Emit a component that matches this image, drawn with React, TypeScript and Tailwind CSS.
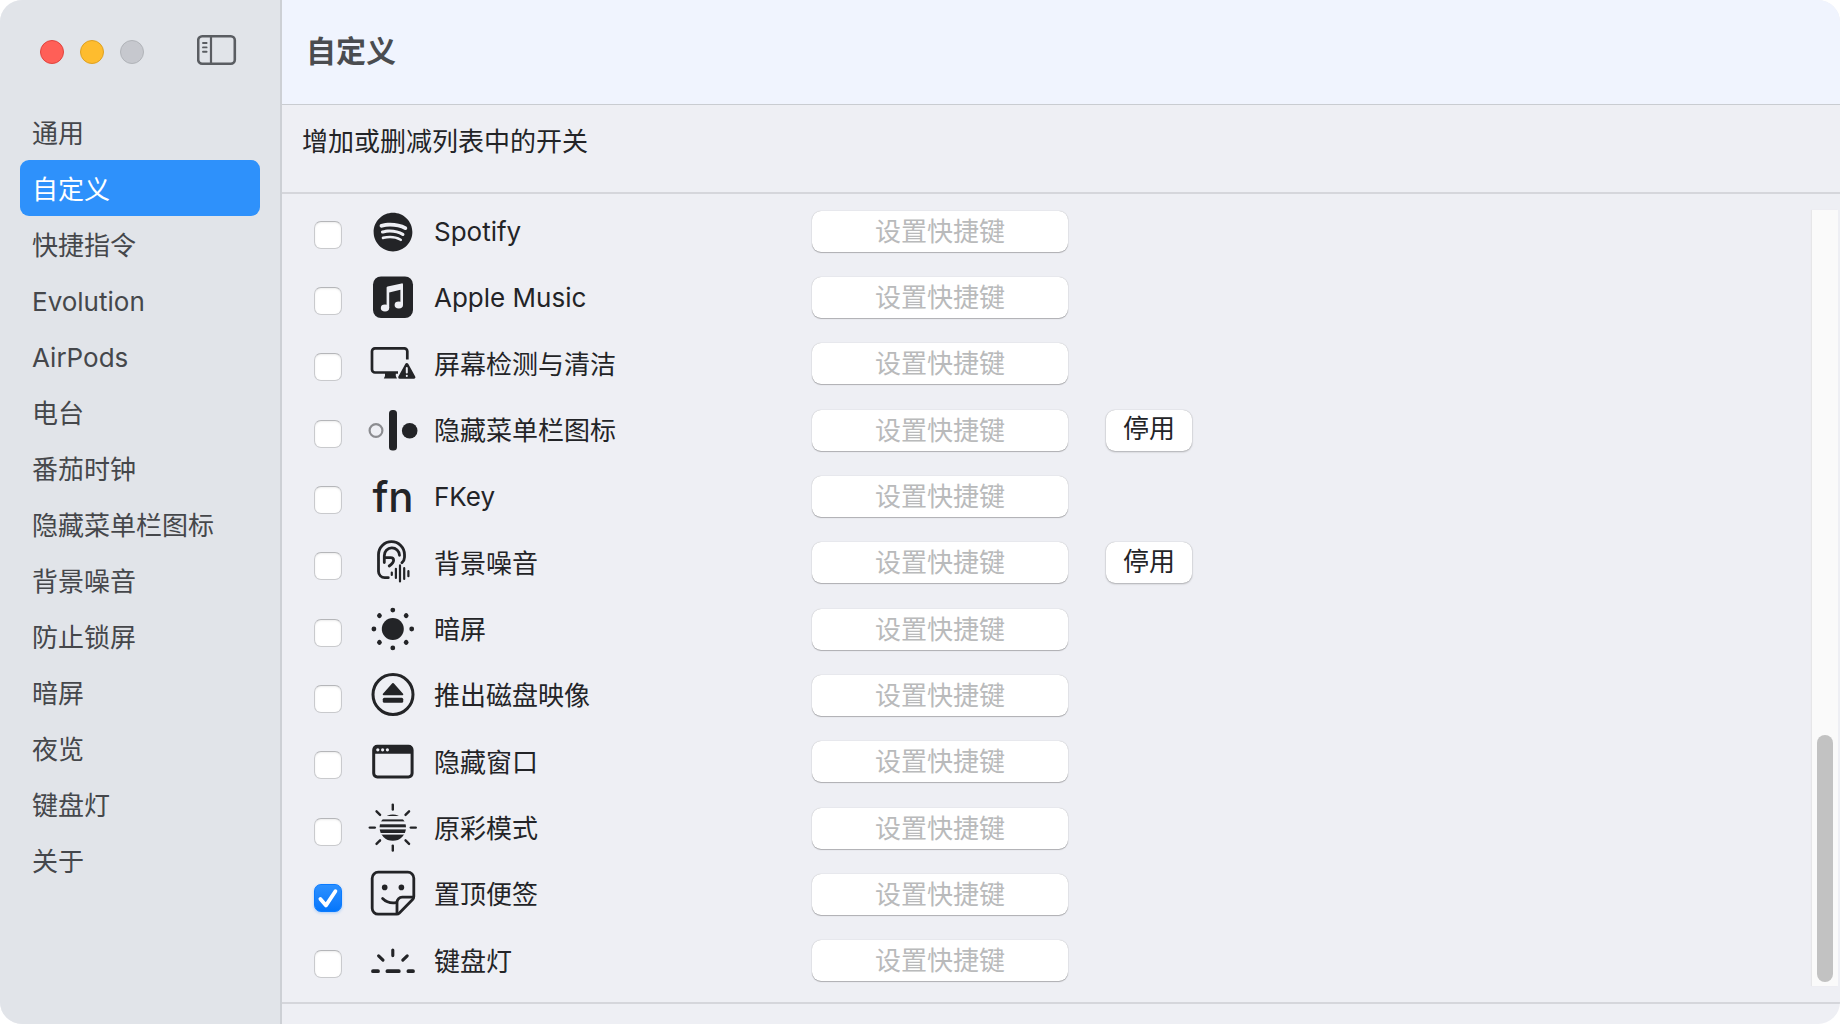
import { useState, type ReactNode } from "react";
import { FaSpotify } from "react-icons/fa";

const NAV = [
  "通用",
  "自定义",
  "快捷指令",
  "Evolution",
  "AirPods",
  "电台",
  "番茄时钟",
  "隐藏菜单栏图标",
  "背景噪音",
  "防止锁屏",
  "暗屏",
  "夜览",
  "键盘灯",
  "关于",
];

const RAYS = [0, 45, 90, 135, 180, 225, 270, 315];

function Glyph({ children }: { children: ReactNode }) {
  return (
    <svg
      viewBox="0 0 48 48"
      className="size-12 overflow-visible"
      fill="none"
      stroke="currentColor"
      strokeLinecap="round"
      strokeLinejoin="round"
      aria-hidden="true"
    >
      {children}
    </svg>
  );
}

function MusicIcon() {
  return (
    <Glyph>
      <rect x="4" y="2.5" width="40" height="41.5" rx="8" fill="currentColor" stroke="none" />
      <g fill="#eeeff4" stroke="none">
        <path d="M17.6 13.6q0-1 1-1.2l14-3q1.4-.2 1.4 1V31h-2.6V15.8L20.2 18.4V34h-2.6z" />
        <ellipse cx="16" cy="34" rx="4.2" ry="3.4" />
        <ellipse cx="29.8" cy="31" rx="4.2" ry="3.4" />
      </g>
    </Glyph>
  );
}

function ScreenIcon() {
  return (
    <Glyph>
      <path
        d="M29 31.5H6a3 3 0 0 1-3-3V10.3a3 3 0 0 1 3-3h29.3a3 3 0 0 1 3 3V18.6"
        strokeWidth="2.7"
        strokeLinecap="butt"
      />
      <path d="M16 31.5h10.8v3.4l1.2 2.7H14.8l1.2-2.7z" fill="currentColor" stroke="none" />
      <path d="M37.8 23.6 44.8 36.2H30.8z" fill="currentColor" strokeWidth="3.2" />
      <path d="M37.8 27v4.6M37.8 34.8v.2" stroke="#eeeff4" strokeWidth="2" />
    </Glyph>
  );
}

function MenuBarIcon() {
  return (
    <Glyph>
      <circle cx="7" cy="23.5" r="6.4" stroke="#8b8c90" strokeWidth="2.2" />
      <rect x="20" y="3" width="8" height="40.5" rx="3.5" fill="currentColor" stroke="none" />
      <circle cx="40.7" cy="23.8" r="7.8" fill="currentColor" stroke="none" />
    </Glyph>
  );
}

function EarIcon() {
  return (
    <Glyph>
      <g strokeWidth="2.8">
        <path d="M19.3 37.7h-3.6a6.2 6.2 0 0 1-6.2-6.2V14.6a13 13 0 0 1 26 0v2.6q0 3-2.6 5.6" />
        <path d="M15.3 22.5v-6.8a7.6 7.6 0 0 1 15.2-.4" />
        <path d="M16.6 17.6h5q3 0 3 2.6t-4.4 5.8" />
      </g>
      <path
        d="M22.8 32.6v2.4M26.9 28.8v9.2M31 25.4v16M35.2 28.2v10.8M39.4 31.2v5"
        strokeWidth="2.2"
      />
    </Glyph>
  );
}

function DimIcon() {
  return (
    <Glyph>
      <g fill="currentColor" stroke="none">
        <circle cx="23.8" cy="23" r="11" />
        {RAYS.map((deg) => (
          <circle key={deg} cx="23.8" cy="4.1" r="2.4" transform={`rotate(${deg} 23.8 23)`} />
        ))}
      </g>
    </Glyph>
  );
}

function EjectIcon() {
  return (
    <Glyph>
      <circle cx="24" cy="22.5" r="20" strokeWidth="3" />
      <path d="M24 12 33.3 22.3H14.7z" fill="currentColor" strokeWidth="2" />
      <rect x="13.8" y="25.7" width="20.4" height="5" rx="1.5" fill="currentColor" stroke="none" />
    </Glyph>
  );
}

function WindowIcon() {
  return (
    <Glyph>
      <rect x="4.7" y="7.3" width="38.4" height="30.6" rx="3.6" strokeWidth="3" />
      <path d="M4 14.8V10.4A4 4 0 0 1 8 6.4h31.6a4 4 0 0 1 4 4v4.4z" fill="currentColor" stroke="none" />
      <g fill="#eeeff4" stroke="none">
        <circle cx="8.8" cy="10.8" r="1.6" />
        <circle cx="13.6" cy="10.8" r="1.6" />
        <circle cx="18.4" cy="10.8" r="1.6" />
      </g>
    </Glyph>
  );
}

function TrueToneIcon() {
  return (
    <Glyph>
      <clipPath id="tone-disc">
        <circle cx="23.8" cy="22.6" r="13.2" />
      </clipPath>
      <g clipPath="url(#tone-disc)" fill="currentColor" stroke="none">
        <rect x="10" y="9" width="28" height="2" />
        <rect x="10" y="14.4" width="28" height="2" />
        <rect x="10" y="19.3" width="28" height="3" />
        <rect x="10" y="24.4" width="28" height="3.6" />
        <rect x="10" y="29.6" width="28" height="7" />
      </g>
      {RAYS.map((deg) => (
        <path key={deg} d="M23.8-.4v5" strokeWidth="2.4" transform={`rotate(${deg} 23.8 22.6)`} />
      ))}
    </Glyph>
  );
}

function StickerIcon() {
  return (
    <Glyph>
      <g strokeWidth="2.8">
        <path d="M27.8 43.2H9.2a6 6 0 0 1-6-6V7.2a6 6 0 0 1 6-6h29.6a6 6 0 0 1 6 6v18.4q0 1.6-1.2 2.8L30.4 42q-1.2 1.2-2.6 1.2" />
        <path d="M28 42.6V31.4a5.2 5.2 0 0 1 5.2-5.2h11" />
        <path d="M13.6 27.4q5.4 5.4 13.2 4.2" />
      </g>
      <circle cx="15.7" cy="16.4" r="2.8" fill="currentColor" stroke="none" />
      <circle cx="32.4" cy="16.4" r="2.8" fill="currentColor" stroke="none" />
    </Glyph>
  );
}

function BacklightIcon() {
  return (
    <Glyph>
      <path d="M4 33.2h5M18.4 33.2h11.4M39.4 33.2h4.6" strokeWidth="3.8" />
      <path d="M23.8 12v5.6M9.6 17.8l4.4 4.4M38.2 17.8l-4.4 4.4" strokeWidth="3.1" />
    </Glyph>
  );
}

type Item = { id: string; name: string; icon: ReactNode; canDisable?: boolean };

const ITEMS: Item[] = [
  { id: "spotify", name: "Spotify", icon: <FaSpotify className="size-10" /> },
  { id: "music", name: "Apple Music", icon: <MusicIcon /> },
  { id: "screen", name: "屏幕检测与清洁", icon: <ScreenIcon /> },
  { id: "menubar", name: "隐藏菜单栏图标", icon: <MenuBarIcon />, canDisable: true },
  { id: "fkey", name: "FKey", icon: <span className="text-[42px] leading-none font-medium">fn</span> },
  { id: "noise", name: "背景噪音", icon: <EarIcon />, canDisable: true },
  { id: "dim", name: "暗屏", icon: <DimIcon /> },
  { id: "eject", name: "推出磁盘映像", icon: <EjectIcon /> },
  { id: "window", name: "隐藏窗口", icon: <WindowIcon /> },
  { id: "truetone", name: "原彩模式", icon: <TrueToneIcon /> },
  { id: "sticker", name: "置顶便签", icon: <StickerIcon /> },
  { id: "backlight", name: "键盘灯", icon: <BacklightIcon /> },
];

function Row({ item, checked, onToggle }: { item: Item; checked: boolean; onToggle: () => void }) {
  return (
    <li className="flex flex-1 items-center">
      <span className="grid shrink-0 pt-[7px]">
        <input
          id={item.id}
          type="checkbox"
          checked={checked}
          onChange={onToggle}
          className="col-start-1 row-start-1 size-7 appearance-none rounded-[7px] border border-[#c9cacd] border-t-[#b5b6b9] bg-white shadow-[inset_0_1px_2px_rgba(0,0,0,0.08)] checked:border-[#0a7bff] checked:bg-linear-to-b checked:from-[#2b90ff] checked:to-[#0376fb] checked:shadow-[0_1px_3px_rgba(10,123,255,0.3)]"
        />
        {checked && (
          <svg
            viewBox="0 0 28 28"
            className="pointer-events-none col-start-1 row-start-1 size-7"
            fill="none"
            stroke="white"
            strokeWidth="3.8"
            strokeLinecap="round"
            strokeLinejoin="round"
            aria-hidden="true"
          >
            <path d="M6.4 15 12 21.4 21.4 7.2" />
          </svg>
        )}
      </span>
      <label htmlFor={item.id} className="ml-[27px] flex w-[443px] shrink-0 items-center gap-[17px] pt-0.5">
        <span className="flex size-12 items-center justify-center">{item.icon}</span>
        {item.name}
      </label>
      <input
        type="text"
        readOnly
        placeholder="设置快捷键"
        aria-label={item.name}
        className="h-[41px] w-64 rounded-[9px] bg-white text-center shadow-[0_0_1px_rgba(0,0,0,0.3),0_1px_1px_rgba(0,0,0,0.25)] outline-none placeholder:text-[#b9babb]"
      />
      {item.canDisable && (
        <button
          type="button"
          className="ml-[38px] flex h-[41px] items-center rounded-[9px] bg-white px-[17px] pb-0.5 shadow-[0_0_1px_rgba(0,0,0,0.3),0_1px_2px_rgba(0,0,0,0.25)]"
        >
          停用
        </button>
      )}
    </li>
  );
}

export default function App() {
  const [active, setActive] = useState("自定义");
  const [enabled, setEnabled] = useState<string[]>(["sticker"]);

  const toggle = (id: string) =>
    setEnabled((prev) => (prev.includes(id) ? prev.filter((x) => x !== id) : [...prev, id]));

  return (
    <div className="flex min-h-screen overflow-hidden rounded-[22px] bg-[#eeeff4] font-[Inter,'Noto_Sans_CJK_SC',sans-serif] text-[26px] leading-9 text-[#232427]">
      <aside className="flex w-[282px] shrink-0 flex-col border-r-2 border-[#cdd0d5] bg-[#e1e4e9]">
        <div className="flex h-[104px] items-center gap-4 pl-10">
          <button type="button" aria-label="关闭" className="size-6 rounded-full border border-[#e0443e] bg-[#ff5f57]" />
          <button type="button" aria-label="最小化" className="size-6 rounded-full border border-[#dea123] bg-[#febc2e]" />
          <button type="button" aria-label="缩放" className="size-6 rounded-full border border-[#b1b4b9] bg-[#c6c8ce]" />
          <button type="button" aria-label="边栏" className="ml-[37px] pb-1 text-[#5a5d62]">
            <svg viewBox="0 0 40 32" className="h-8 w-10" fill="none" stroke="currentColor" strokeLinecap="round">
              <rect x="1.2" y="2.2" width="36.6" height="27.6" rx="4" strokeWidth="2.6" />
              <path d="M14 2.5v27" strokeWidth="2.2" />
              <path d="M6 9h3.6M6 13.4h3.6M6 17.8h3.6" strokeWidth="1.9" />
            </svg>
          </button>
        </div>
        <nav className="flex flex-col px-5">
          {NAV.map((name) => (
            <a
              key={name}
              href="#"
              onClick={() => setActive(name)}
              className={
                name === active
                  ? "flex h-14 items-center rounded-[9px] bg-[#2e91fb] pt-[3px] pl-3 text-white"
                  : "flex h-14 items-center rounded-[9px] pt-[3px] pl-3 text-[#45474b]"
              }
            >
              {name}
            </a>
          ))}
        </nav>
      </aside>

      <main className="flex min-w-0 flex-1 flex-col">
        <header className="flex h-[105px] items-center border-b border-[#c9ccd1] bg-[#f0f4fe] pb-0.5 pl-6">
          <h1 className="text-[30px] font-bold text-[#4a4c50]">{active}</h1>
        </header>
        <p className="h-[89px] border-b-2 border-[#d5d6db] pt-[19px] pl-5">增加或删减列表中的开关</p>

        <section className="flex flex-1">
          <ul className="flex flex-1 flex-col pt-1 pb-2 pl-8">
            {ITEMS.map((item) => (
              <Row
                key={item.id}
                item={item}
                checked={enabled.includes(item.id)}
                onToggle={() => toggle(item.id)}
              />
            ))}
          </ul>
          <div className="mt-4 mr-0.5 mb-4 flex w-[26px] flex-col items-center justify-end bg-[#fafafa] pb-1 shadow-[-1px_0_1px_#e6e6e8]">
            <div className="h-[247px] w-4 rounded-full bg-[#c2c2c2]" />
          </div>
        </section>
        <footer className="h-[22px] border-t-2 border-[#d5d6db]" />
      </main>
    </div>
  );
}
